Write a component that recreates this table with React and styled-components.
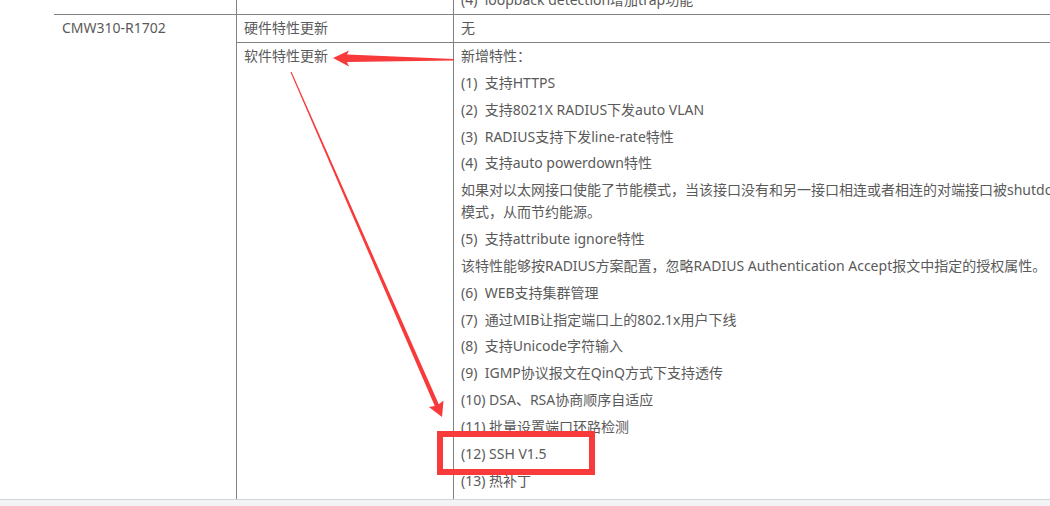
import React from 'react';
import styled, { createGlobalStyle } from 'styled-components';

const Global = createGlobalStyle`
  html, body {
    margin: 0;
    padding: 0;
    background: #ffffff;
  }
  body {
    font-family: "Noto Sans", "Noto Sans CJK SC", sans-serif;
  }
`

const Page = styled.div`
  position: relative;
  width: 1050px;
  height: 506px;
  overflow: hidden;
  display: flex;
  flex-direction: column;
  background: #ffffff;
`
const TableArea = styled.div`
  flex: 1;
  overflow: hidden;
`
const Table = styled.table`
  margin-left: 54px;
  margin-top: -11px;
  border-collapse: separate;
  border-spacing: 0;
  table-layout: fixed;
  width: 1400px;
  font-size: 14px;
  line-height: 22px;
  color: #5a5a5a;
`
const Cell = styled.td`
  vertical-align: top;
  text-align: left;
  padding: ${p => p.$first ? '0' : '2px'} 7px ${p => p.$tall ? '40px' : '3px'} ${p => p.$lead ? '8px' : '7px'};
  border-right: ${p => p.$last ? 'none' : '1px solid #828282'};
  border-bottom: 1px solid #828282;
  white-space: nowrap;
`
const Para = styled.p`
  margin: 0 0 4.85px 0;
  white-space: nowrap;
`
const Footer = styled.div`
  height: 6px;
  border-top: 1px solid #d3d3d3;
  background: #f2f3f5;
`
const Marks = styled.svg`
  position: absolute;
  left: 0;
  top: 0;
  pointer-events: none;
`

const items = [
  '新增特性：',
  '(1)\u00a0 支持HTTPS',
  '(2)\u00a0 支持8021X RADIUS下发auto VLAN',
  '(3)\u00a0 RADIUS支持下发line-rate特性',
  '(4)\u00a0 支持auto powerdown特性',
  null,
  '(5)\u00a0 支持attribute ignore特性',
  '该特性能够按RADIUS方案配置，忽略RADIUS Authentication Accept报文中指定的授权属性。',
  '(6)\u00a0 WEB支持集群管理',
  '(7)\u00a0 通过MIB让指定端口上的802.1x用户下线',
  '(8)\u00a0 支持Unicode字符输入',
  '(9)\u00a0 IGMP协议报文在QinQ方式下支持透传',
  '(10) DSA、RSA协商顺序自适应',
  '(11) 批量设置端口环路检测',
  '(12) SSH V1.5',
  '(13) 热补丁',
]

const RED = '#f83a3a'

const App = () => {
  return (
    <Page>
      <Global />
      <TableArea>
        <Table>
          <colgroup>
            <col style={{ width: 183 }} />
            <col style={{ width: 217 }} />
            <col style={{ width: 1000 }} />
          </colgroup>
          <tbody>
            <tr>
              <Cell $first $lead></Cell>
              <Cell $first></Cell>
              <Cell $first $last>(4)&nbsp; loopback detection增加trap功能</Cell>
            </tr>
            <tr>
              <Cell rowSpan={2} $lead $tall>CMW310-R1702</Cell>
              <Cell>硬件特性更新</Cell>
              <Cell $last>无</Cell>
            </tr>
            <tr>
              <Cell $tall>软件特性更新</Cell>
              <Cell $last $tall>
                {items.map((t, i) =>
                  t === null ? (
                    <Para key={i}>
                      如果对以太网接口使能了节能模式，当该接口没有和另一接口相连或者相连的对端接口被shutdown时，设备会自动进入节能
                      <br />
                      模式，从而节约能源。
                    </Para>
                  ) : (
                    <Para key={i}>{t}</Para>
                  )
                )}
              </Cell>
            </tr>
          </tbody>
        </Table>
      </TableArea>
      <Footer />
      <Marks width="1050" height="506" viewBox="0 0 1050 506">
        <polygon
          fill={RED}
          points="454,59 347,54.5 349,50.5 333,58 349,66.5 347,62 454,60.6"
        />
        <polygon
          fill={RED}
          points="291.5,71.8 438.8,404.2 443.5,400.5 442,417 428.9,406.9 434.8,406 290.5,72.2"
        />
        <rect x="440" y="434" width="152" height="38" fill="none" stroke={RED} strokeWidth="6" />
      </Marks>
    </Page>
  )
}

export default App
